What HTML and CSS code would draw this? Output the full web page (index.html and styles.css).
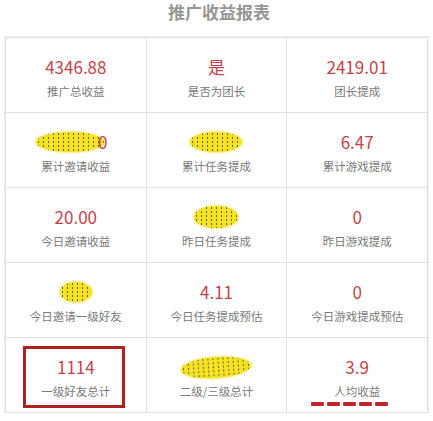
FILE: index.html
```html
<!DOCTYPE html>
<html lang="zh-CN">
<head>
  <meta charset="utf-8">
  <title>推广收益报表</title>
  <link rel="stylesheet" href="styles.css">
</head>
<body>
  <h1 class="title">推广收益报表</h1>

  <div class="report">
    <div class="cell">
      <div class="value">4346.88</div>
      <div class="label">推广总收益</div>
    </div>
    <div class="cell">
      <div class="value">是</div>
      <div class="label">是否为团长</div>
    </div>
    <div class="cell">
      <div class="value">2419.01</div>
      <div class="label">团长提成</div>
    </div>

    <div class="cell">
      <div class="value value-hidden"><span class="blob blob-wide"></span><span class="peek">0</span></div>
      <div class="label">累计邀请收益</div>
    </div>
    <div class="cell">
      <div class="value value-hidden"><span class="blob blob-mid"></span></div>
      <div class="label">累计任务提成</div>
    </div>
    <div class="cell">
      <div class="value">6.47</div>
      <div class="label">累计游戏提成</div>
    </div>

    <div class="cell">
      <div class="value">20.00</div>
      <div class="label">今日邀请收益</div>
    </div>
    <div class="cell">
      <div class="value value-hidden"><span class="blob blob-small"></span></div>
      <div class="label">昨日任务提成</div>
    </div>
    <div class="cell">
      <div class="value">0</div>
      <div class="label">昨日游戏提成</div>
    </div>

    <div class="cell">
      <div class="value value-hidden"><span class="blob blob-tiny"></span></div>
      <div class="label">今日邀请一级好友</div>
    </div>
    <div class="cell">
      <div class="value">4.11</div>
      <div class="label">今日任务提成预估</div>
    </div>
    <div class="cell">
      <div class="value">0</div>
      <div class="label">今日游戏提成预估</div>
    </div>

    <div class="cell cell-marked">
      <div class="value">1114</div>
      <div class="label">一级好友总计</div>
      <div class="mark-box"></div>
    </div>
    <div class="cell">
      <div class="value value-hidden"><span class="blob blob-long"></span></div>
      <div class="label">二级/三级总计</div>
    </div>
    <div class="cell cell-marked">
      <div class="value">3.9</div>
      <div class="label">人均收益</div>
      <div class="mark-dash">
        <span></span><span></span><span></span><span></span><span></span>
      </div>
    </div>
  </div>
</body>
</html>
```

FILE: styles.css
```css
body{
  margin: 0;
  background-color: #FFFFFF;
  font-family: "Noto Sans CJK SC", "Noto Sans", sans-serif;
}

.title{
  margin: 0;
  height: 36px;
  padding-top: 1px;
  font-size: 17px;
  line-height: 22px;
  font-weight: bold;
  text-align: center;
  color: #969696;
  padding-left: 5px;
}

.report{
  margin-left: 5px;
  width: 421px;
  display: grid;
  grid-template-columns: repeat(3, 1fr);
  grid-auto-rows: 74px;
  gap: 1px;
  background-color: #e0e0e0;
  border: 1px solid #e0e0e0;
  box-shadow: 0 0 0 1px #f0f0f0;
}

.cell{
  position: relative;
  background-color: #FFFFFF;
  display: flex;
  flex-direction: column;
  align-items: center;
  padding-top: 17px;
  box-sizing: border-box;
}

.value{
  height: 24px;
  font-size: 17px;
  line-height: 24px;
  color: #c4434b;
  display: flex;
  align-items: center;
}

.label{
  margin-top: 4px;
  font-size: 11.5px;
  line-height: 16px;
  color: #7a7a7a;
}

/* scribbled-out values */
.blob{
  display: inline-block;
  height: 20px;
  border-radius: 50%;
  background-color: #f4e224;
  background-image: radial-gradient(circle, #6a6030 0.6px, transparent 1px);
  background-size: 5px 4px;
  box-shadow: 0 0 2px 1px #f8ec78;
}

.blob-wide{ width: 68px; }
.blob-mid{ width: 52px; }
.blob-small{ width: 44px; height: 22px; }
.blob-tiny{ width: 32px; }
.blob-long{ width: 70px; height: 21px; transform: rotate(-4deg); }

.value-hidden .blob-wide{ margin-left: -8px; }

.peek{
  margin-left: -6px;
  color: #c4434b;
}

/* annotations drawn over the table */
.mark-box{
  position: absolute;
  left: 17px;
  top: 8px;
  width: 102px;
  height: 62px;
  border: 3px solid #b0201f;
  box-sizing: border-box;
}

.mark-dash{
  position: absolute;
  left: 24px;
  top: 64px;
  display: flex;
  gap: 3px;
}

.mark-dash span{
  width: 13px;
  height: 4px;
  border-radius: 1px;
  background-color: #c4252b;
}
```
